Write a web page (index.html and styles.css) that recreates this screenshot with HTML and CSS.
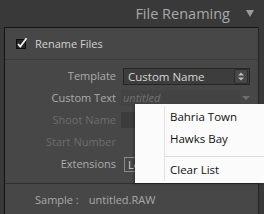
FILE: index.html
```html
<!DOCTYPE html>
<html lang="en">
<head>
    <meta charset="UTF-8">
    <title>File Renaming</title>
    <link rel="stylesheet" href="styles.css">
</head>
<body>
    <div class="header">
        <span class="title">File Renaming</span>
        <svg class="caret" width="8" height="7" viewBox="0 0 8 7"><polygon points="0,0 8,0 4,7" fill="#9c9c9c"/></svg>
    </div>

    <div class="panel">
        <div class="rename-row">
            <svg class="check" width="12" height="12" viewBox="0 0 12 12">
                <rect x="0.5" y="2.5" width="9" height="9" fill="#262626" stroke="#0c0c0c"/>
                <path d="M2 7 L4.3 9.6 L10.5 1.2" fill="none" stroke="#f2f2f2" stroke-width="1.8"/>
            </svg>
            <span>Rename Files</span>
        </div>

        <div class="fields">
            <div class="label">Template</div>
            <div class="select">
                <span>Custom Name</span>
                <span class="stepper">
                    <svg width="6" height="9" viewBox="0 0 6 9"><polygon points="0,3.5 3,0.5 6,3.5" fill="#bdbdbd"/><polygon points="0,5.5 6,5.5 3,8.5" fill="#bdbdbd"/></svg>
                </span>
            </div>

            <div class="label">Custom Text</div>
            <div class="text-row">
                <div class="input"><em>untitled</em></div>
                <svg width="8" height="5" viewBox="0 0 8 5"><polygon points="0,0 8,0 4,4" fill="#6e6e6e"/></svg>
            </div>

            <div class="label dim">Shoot Name</div>
            <div class="text-row"><div class="input dark"></div></div>

            <div class="label dim">Start Number</div>
            <div></div>

            <div class="label">Extensions</div>
            <div class="text-row"><div class="ext">Le</div></div>
        </div>

        <div class="sample">
            <span>Sample :</span>
            <span>untitled.RAW</span>
        </div>
    </div>

    <div class="menu">
        <div class="menu-item">Bahria Town</div>
        <div class="menu-item">Hawks Bay</div>
        <div class="menu-sep"></div>
        <div class="menu-item last">Clear List</div>
    </div>
</body>
</html>
```

FILE: styles.css
```css
body {
    margin: 0;
    width: 264px;
    height: 214px;
    overflow: hidden;
    position: relative;
    background-color: #393939;
    font-family: "Open Sans", "Noto Sans", sans-serif;
}
.header {
    height: 27px;
    display: flex;
    align-items: center;
    justify-content: flex-end;
    gap: 16px;
    padding-right: 10px;
    color: #a8a8a8;
    font-size: 14.5px;
}
.header .title {
    margin-top: -1px;
}
.panel {
    margin-left: 4px;
    width: 253px;
    height: 187px;
    background-color: #474747;
    border-left: 1px solid #141414;
    border-top: 1px solid #141414;
    border-right: 1px solid #232323;
}
.rename-row {
    height: 31px;
    display: flex;
    align-items: center;
    gap: 7px;
    padding-left: 11px;
    border-bottom: 1px solid #3c3c3c;
    color: #d2d2d2;
    font-size: 11px;
}
.check {
    margin-top: -2px;
}
.fields {
    display: grid;
    grid-template-columns: 111px 1fr;
    grid-auto-rows: 22px;
    column-gap: 5px;
    padding: 5px 0 8px;
    font-size: 11px;
}
.label {
    text-align: right;
    line-height: 22px;
    color: #acacac;
}
.label.dim {
    color: #6c6c6c;
}
.select {
    align-self: center;
    margin-left: 2px;
    width: 121px;
    height: 15px;
    box-sizing: content-box;
    display: flex;
    align-items: center;
    justify-content: space-between;
    background-color: #3d3d3d;
    border: 1px solid #262626;
    color: #d6d6d6;
    font-size: 11.5px;
    padding-left: 4px;
}
.stepper {
    width: 12px;
    height: 13px;
    margin-right: 1px;
    display: flex;
    align-items: center;
    justify-content: center;
    border: 1px solid #2c2c2c;
    border-radius: 2px;
    background-color: #474747;
}
.text-row {
    display: flex;
    align-items: center;
    gap: 2px;
}
.input {
    width: 117px;
    height: 16px;
    background-color: #434343;
    padding-left: 2px;
    line-height: 16px;
}
.input em {
    color: #727272;
    font-size: 11px;
}
.input.dark {
    background-color: #3c3c3c;
}
.ext {
    margin-left: 3px;
    width: 20px;
    height: 13px;
    line-height: 13px;
    padding: 0 3px;
    border: 1px solid #8a8a8a;
    color: #cfcfcf;
}
.sample {
    height: 30px;
    display: flex;
    align-items: center;
    gap: 10px;
    padding-left: 30px;
    border-top: 1px solid #2e2e2e;
    color: #a9a9a9;
    font-size: 11px;
}
.menu {
    position: absolute;
    left: 135px;
    top: 104px;
    width: 129px;
    height: 79px;
    box-sizing: border-box;
    padding: 2px 0 0 30px;
    background-color: #fbfbfb;
    box-shadow: -1px 1px 2px rgba(0,0,0,0.35);
    font-size: 11.5px;
    color: #111;
}
.menu::before {
    content: "";
    position: absolute;
    left: 29px;
    top: 2px;
    bottom: 2px;
    border-left: 1px solid #e2e2e2;
}
.menu-item {
    height: 22px;
    line-height: 22px;
    padding-left: 5px;
}
.menu-item.last {
    height: 20px;
    line-height: 20px;
}
.menu-sep {
    margin: 6px 0 3px;
    border-top: 1px solid #dcdcdc;
}
```
